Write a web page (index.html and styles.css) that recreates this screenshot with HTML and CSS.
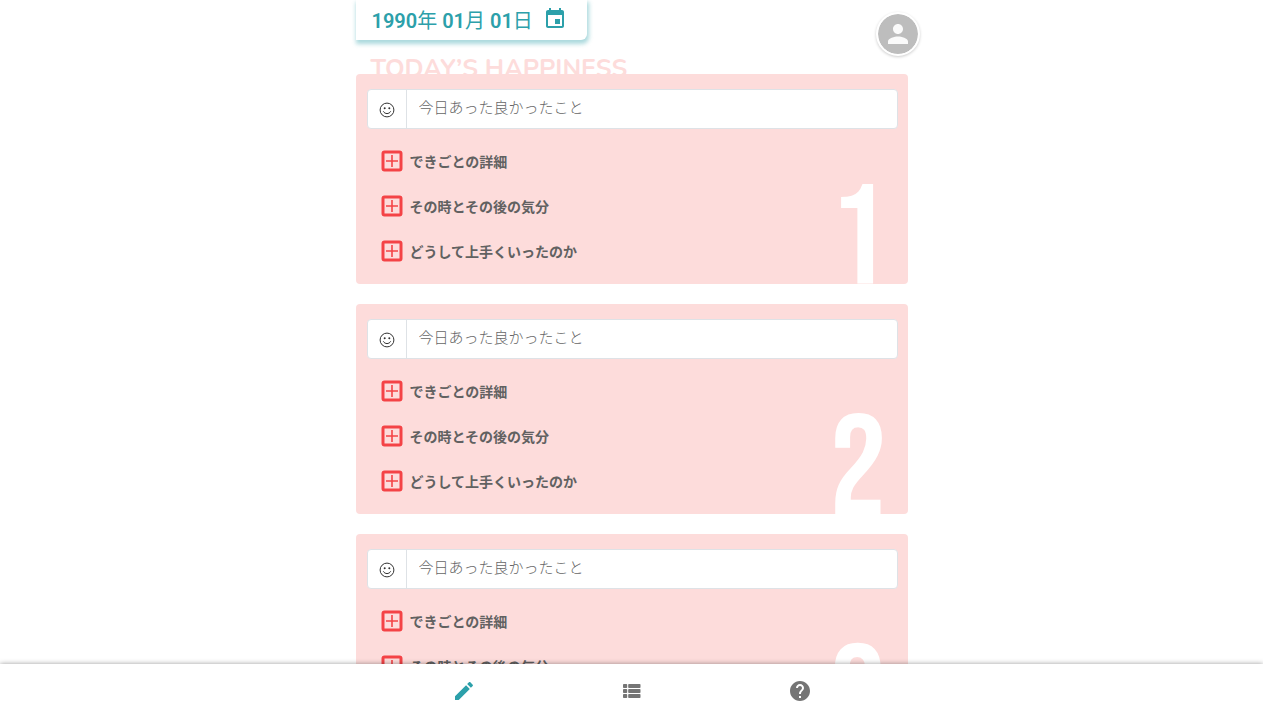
FILE: index.html
```html
<!DOCTYPE html>
<html lang="ja">
<head>
<meta charset="utf-8">
<meta name="viewport" content="width=device-width, initial-scale=1">
<title>Today’s Happiness</title>
<link rel="stylesheet" href="styles.css">
</head>
<body>
<svg class="sprite" aria-hidden="true">
  <symbol id="plus" viewBox="0 0 22 22"><rect x="2" y="2" width="18" height="18" rx="1.5" fill="none" stroke="#f44346" stroke-width="3"/><path d="M11 5v12M5 11h12" fill="none" stroke="#f44346" stroke-width="1.6"/></symbol>
  <symbol id="smile" viewBox="0 0 16 16"><circle cx="8" cy="8" r="6.900" fill="none" stroke="#333" stroke-width="1"/><circle cx="5.700" cy="6.200" r="1" fill="#333"/><circle cx="10.300" cy="6.200" r="1" fill="#333"/><path d="M4.300 9.300c1.500 3 5.900 3 7.400 0" fill="none" stroke="#333" stroke-width="1"/></symbol>
</svg>
<div class="app">
  <main class="page">
    <div class="column">
      <header class="top">
        <button class="date" type="button">
          <span>1990<span class="unit">年</span> 01<span class="unit">月</span> 01<span class="unit">日</span></span>
          <svg class="icon" viewBox="0 0 24 24" aria-hidden="true"><path d="M17 12h-5v5h5v-5zM16 1v2H8V1H6v2H5c-1.110 0-1.990.9-1.990 2L3 19c0 1.100.89 2 2 2h14c1.100 0 2-.9 2-2V5c0-1.100-.9-2-2-2h-1V1h-2zm3 18H5V8h14v11z"/></svg>
        </button>
        <button class="avatar" type="button" aria-label="アカウント">
          <svg viewBox="0 0 24 24" aria-hidden="true"><path d="M12 12c2.210 0 4-1.790 4-4s-1.790-4-4-4-4 1.790-4 4 1.790 4 4 4zm0 2c-2.670 0-8 1.340-8 4v2h16v-2c0-2.660-5.330-4-8-4z"/></svg>
        </button>
      </header>
      <h1 class="title">TODAY’S HAPPINESS</h1>
      <div class="cards">
        <section class="card">
          <div class="field"><label class="face" for="good1" aria-label="良かったこと 1"><svg><use href="#smile"/></svg></label><input id="good1" type="text" placeholder="今日あった良かったこと"></div>
          <div class="details">
            <button type="button"><svg><use href="#plus"/></svg>できごとの詳細</button>
            <button type="button"><svg><use href="#plus"/></svg>その時とその後の気分</button>
            <button type="button"><svg><use href="#plus"/></svg>どうして上手くいったのか</button>
          </div>
          <span class="number">1</span>
        </section>
        <section class="card">
          <div class="field"><label class="face" for="good2" aria-label="良かったこと 2"><svg><use href="#smile"/></svg></label><input id="good2" type="text" placeholder="今日あった良かったこと"></div>
          <div class="details">
            <button type="button"><svg><use href="#plus"/></svg>できごとの詳細</button>
            <button type="button"><svg><use href="#plus"/></svg>その時とその後の気分</button>
            <button type="button"><svg><use href="#plus"/></svg>どうして上手くいったのか</button>
          </div>
          <span class="number">2</span>
        </section>
        <section class="card">
          <div class="field"><label class="face" for="good3" aria-label="良かったこと 3"><svg><use href="#smile"/></svg></label><input id="good3" type="text" placeholder="今日あった良かったこと"></div>
          <div class="details">
            <button type="button"><svg><use href="#plus"/></svg>できごとの詳細</button>
            <button type="button"><svg><use href="#plus"/></svg>その時とその後の気分</button>
            <button type="button"><svg><use href="#plus"/></svg>どうして上手くいったのか</button>
          </div>
          <span class="number">3</span>
        </section>
      </div>
    </div>
  </main>
  <nav class="nav">
    <a class="active" href="#write" aria-label="書く"><svg viewBox="0 0 24 24" aria-hidden="true"><path d="M3 17.250V21h3.750L17.810 9.940l-3.750-3.750L3 17.250zM20.710 7.040c.39-.39.39-1.020 0-1.410l-2.340-2.340c-.39-.39-1.020-.39-1.410 0l-1.830 1.830 3.750 3.750 1.830-1.830z"/></svg></a>
    <a href="#list" aria-label="一覧"><svg viewBox="0 0 24 24" aria-hidden="true"><rect x="3" y="5" width="4.200" height="4" rx=".8"/><rect x="3" y="10" width="4.200" height="4" rx=".8"/><rect x="3" y="15" width="4.200" height="4" rx=".8"/><rect x="8.200" y="5" width="12.300" height="4" rx=".8"/><rect x="8.200" y="10" width="12.300" height="4" rx=".8"/><rect x="8.200" y="15" width="12.300" height="4" rx=".8"/></svg></a>
    <a href="#help" aria-label="ヘルプ"><svg viewBox="0 0 24 24" aria-hidden="true"><path d="M12 2C6.480 2 2 6.480 2 12s4.480 10 10 10 10-4.480 10-10S17.520 2 12 2zm1 17h-2v-2h2v2zm2.070-7.750l-.9.920C13.450 12.900 13 13.500 13 15h-2v-.5c0-1.100.45-2.100 1.170-2.830l1.240-1.260c.37-.36.59-.86.59-1.410 0-1.100-.9-2-2-2s-2 .9-2 2H8c0-2.210 1.790-4 4-4s4 1.790 4 4c0 .88-.36 1.680-.93 2.250z"/></svg></a>
  </nav>
</div>
</body>
</html>
```

FILE: styles.css
```css
* { box-sizing: border-box; }

body {
  margin: 0;
  background: #fff;
  color: #616161;
  font-family: Roboto, "Noto Sans CJK JP", sans-serif;
}

button {
  margin: 0;
  border: 0;
  background: none;
  color: inherit;
  font: inherit;
  cursor: pointer;
}

.sprite {
  position: absolute;
  width: 0;
  height: 0;
}

.app {
  display: grid;
  grid-template-rows: minmax(0, 1fr) auto;
  height: 100vh;
  padding-right: 17px;
}

.page {
  overflow-y: auto;
  scrollbar-width: none;
}

.column {
  max-width: 552px;
  margin: 0 auto;
  padding-bottom: 20px;
}

.top {
  display: flex;
  align-items: flex-start;
  justify-content: space-between;
}

.date {
  display: flex;
  align-items: center;
  gap: 10px;
  height: 40px;
  padding: 0 20px 2px 16px;
  border-radius: 0 0 6px 0;
  background: #fff;
  box-shadow: 1px 3px 4px 1px rgba(44, 160, 170, .4);
  color: #2ca0aa;
  font-size: 20px;
  font-weight: 600;
}

.unit { font-weight: 400; }

.icon {
  width: 24px;
  height: 24px;
  fill: currentColor;
}

.avatar {
  display: grid;
  place-items: center;
  width: 44px;
  height: 44px;
  margin: 12px -12px 0 0;
  padding: 0;
  border: 2px solid #fff;
  border-radius: 50%;
  background: #bdbdbd padding-box;
  box-shadow: 0 1px 3px rgba(0, 0, 0, .2);
}

.avatar svg {
  width: 30px;
  height: 30px;
  fill: #fafafa;
}

.title {
  height: 18px;
  margin: 0;
  padding-left: 15px;
  color: #fddcdb;
  font-family: Nunito, Lato, sans-serif;
  font-size: 25px;
  font-weight: 700;
  line-height: 26px;
}

.cards {
  display: grid;
  gap: 20px;
}

.card {
  position: relative;
  padding: 15px 10px 10px 11px;
  overflow: hidden;
  border-radius: 4px;
  background: #fddcdb;
}

.field {
  display: flex;
  height: 40px;
  border: 1px solid #dee2e6;
  border-radius: 4px;
  background: #fff;
}

.face {
  display: grid;
  flex: 0 0 39px;
  place-items: center;
  padding-top: 2px;
  border-right: 1px solid #dee2e6;
}

.face svg {
  width: 16px;
  height: 16px;
}

.field input {
  flex: 1;
  min-width: 0;
  padding: 0 12px 6px;
  border: 0;
  border-radius: 4px;
  outline: 0;
  background: transparent;
  color: #333;
  font-family: "Noto Sans CJK JP", sans-serif;
  font-size: 15px;
  font-weight: 300;
}

.field input::placeholder {
  color: #666;
  opacity: 1;
}

.details {
  display: flex;
  flex-direction: column;
  align-items: flex-start;
  padding: 10px 0 0 14px;
}

.details button {
  display: flex;
  align-items: center;
  gap: 7px;
  height: 45px;
  padding: 0 0 1px;
  font-family: "Noto Sans CJK JP", sans-serif;
  font-size: 14px;
  font-weight: 700;
}

.details svg {
  width: 22px;
  height: 22px;
}

.number {
  position: absolute;
  right: 21px;
  bottom: 0;
  color: #fff;
  font-family: "Bebas Neue", "Liberation Sans Narrow", "Roboto Condensed", sans-serif;
  font-size: 142px;
  font-weight: 400;
  line-height: 84px;
}

.nav {
  z-index: 1;
  display: flex;
  justify-content: center;
  height: 56px;
  padding-bottom: 2px;
  background: #fff;
  box-shadow: 0 0 5px rgba(0, 0, 0, .4);
  clip-path: inset(-8px 0 0);
}

.nav a {
  display: grid;
  flex: 0 1 168px;
  place-items: center;
  color: #757575;
}

.nav a.active { color: #2ca0aa; }

.nav svg {
  width: 24px;
  height: 24px;
  fill: currentColor;
}
```
